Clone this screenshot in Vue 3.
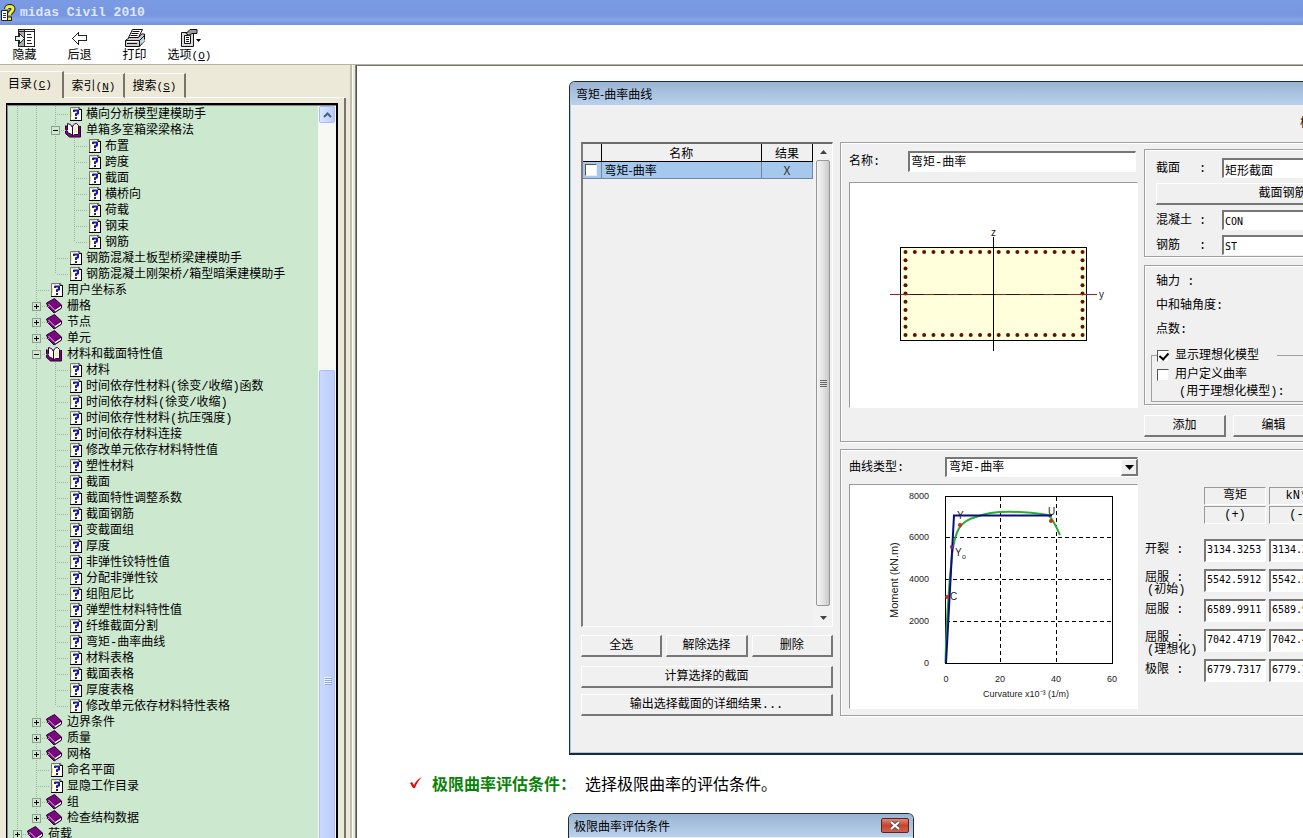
<script setup>
import { ref } from 'vue'

const source = [
  [2, 'page', '横向分析模型建模助手'],
  [2, 'open', '单箱多室箱梁梁格法'],
  [3, 'page', '布置'],
  [3, 'page', '跨度'],
  [3, 'page', '截面'],
  [3, 'page', '横桥向'],
  [3, 'page', '荷载'],
  [3, 'page', '钢束'],
  [3, 'page', '钢筋'],
  [2, 'page', '钢筋混凝土板型桥梁建模助手'],
  [2, 'page', '钢筋混凝土刚架桥/箱型暗渠建模助手'],
  [1, 'page', '用户坐标系'],
  [1, 'book', '栅格'],
  [1, 'book', '节点'],
  [1, 'book', '单元'],
  [1, 'open', '材料和截面特性值'],
  [2, 'page', '材料'],
  [2, 'page', '时间依存性材料(徐变/收缩)函数'],
  [2, 'page', '时间依存材料(徐变/收缩)'],
  [2, 'page', '时间依存性材料(抗压强度)'],
  [2, 'page', '时间依存材料连接'],
  [2, 'page', '修改单元依存材料特性值'],
  [2, 'page', '塑性材料'],
  [2, 'page', '截面'],
  [2, 'page', '截面特性调整系数'],
  [2, 'page', '截面钢筋'],
  [2, 'page', '变截面组'],
  [2, 'page', '厚度'],
  [2, 'page', '非弹性铰特性值'],
  [2, 'page', '分配非弹性铰'],
  [2, 'page', '组阻尼比'],
  [2, 'page', '弹塑性材料特性值'],
  [2, 'page', '纤维截面分割'],
  [2, 'page', '弯矩-曲率曲线'],
  [2, 'page', '材料表格'],
  [2, 'page', '截面表格'],
  [2, 'page', '厚度表格'],
  [2, 'page', '修改单元依存材料特性表格'],
  [1, 'book', '边界条件'],
  [1, 'book', '质量'],
  [1, 'book', '网格'],
  [1, 'page', '命名平面'],
  [1, 'page', '显隐工作目录'],
  [1, 'book', '组'],
  [1, 'book', '检查结构数据'],
  [0, 'book', '荷载']
]

// A guide runs through a row when a later sibling exists at that depth.
function continues(index, depth) {
  for (let i = index + 1; i < source.length; i++) {
    if (source[i][0] < depth) return false
    if (source[i][0] === depth) return true
  }
  return depth === 0
}

const rows = source.map(([level, kind, label], index) => ({
  level,
  kind,
  label,
  guides: Array.from({ length: level + 1 }, (_, depth) => ({
    full: continues(index, depth),
    branch: depth === level
  }))
}))

const results = [
  { id: 'crack', label: '开裂 :', note: '', value: '3134.3253' },
  { id: 'yield0', label: '屈服 :', note: '(初始)', value: '5542.5912' },
  { id: 'yield', label: '屈服 :', note: '', value: '6589.9911' },
  { id: 'yieldi', label: '屈服 :', note: '(理想化)', value: '7042.4719' },
  { id: 'ultimate', label: '极限 :', note: '', value: '6779.7317' }
]

const rebar = []
for (let i = 0; i < 20; i++) {
  const x = 56 + i * 9.32
  rebar.push([x, 70], [x, 153])
}
for (let i = 1; i < 10; i++) {
  const y = 70 + i * 8.3
  rebar.push([56, y], [233, y])
}

const sectionName = ref('弯矩-曲率')
const ideal = ref(true)
const custom = ref(false)
const picked = ref(false)
</script>

<template>
  <div class="window">
    <header class="titlebar">
      <svg class="app-icon" width="16" height="18" viewBox="0 0 16 18">
        <path d="M1.500 6.500h6v10h-6z" fill="#fff" stroke="#222" />
        <path d="M3 9.500h3M3 11.500h3M3 13.500h3" stroke="#333" />
        <path d="M6.500 5C6.500 1.500 13 1.500 13 5C13 7.500 9.500 8 9.500 11" fill="none" stroke="#222" stroke-width="5" />
        <path d="M6.500 5C6.500 1.500 13 1.500 13 5C13 7.500 9.500 8 9.500 11" fill="none" stroke="#f5ee32" stroke-width="3" />
        <rect x="7.500" y="13" width="4" height="3.500" fill="#f5ee32" stroke="#222" />
      </svg>
      <h1>midas Civil 2010</h1>
    </header>

    <nav class="toolbar">
      <button type="button">
        <svg width="20" height="20" viewBox="0 0 20 20" shape-rendering="crispEdges">
          <path d="M3.500 1.500h16v17h-16z" fill="#fff" stroke="#222" />
          <path d="M4 2h5v16h-5z" fill="#aaa" />
          <path d="M9.500 1v17M3 3.500h17M12 6.500h4M12 9.500h5M12 12.500h4M12 15.500h5" stroke="#222" />
          <path d="M0.500 8.500h4v-3l5 5l-5 5v-3h-4z" fill="#e4f2f2" stroke="#222" />
        </svg>
        <span>隐藏</span>
      </button>
      <button type="button">
        <svg width="20" height="20" viewBox="0 0 20 20" shape-rendering="crispEdges">
          <path d="M2.500 10.500l6-6v3h8v5h-8v4z" fill="#fff" stroke="#222" />
        </svg>
        <span>后退</span>
      </button>
      <button type="button">
        <svg width="22" height="20" viewBox="0 0 22 20">
          <path d="M8.500 1.500h10l-4 8h-10z" fill="#fff" stroke="#111" />
          <path d="M8.500 3.500h7M7.500 5.500h7M6.500 7.500h7" stroke="#111" />
          <path d="M1.500 12.500l4-3h9l3-3.500h3v7l-5 5.500h-14z" fill="#ccc" stroke="#111" />
          <path d="M1.500 12.500h14l5-5M15.500 12.500v6M3 15.500h10" fill="none" stroke="#111" />
          <path d="M3 13.500h11" stroke="#fff" />
          <path d="M17.500 14.500l3-3" stroke="#a8e8ec" stroke-width="2" />
        </svg>
        <span>打印</span>
      </button>
      <button type="button">
        <svg width="22" height="20" viewBox="0 0 22 20">
          <path d="M2.500 4.500h12v14h-12z" fill="#ddd" stroke="#111" />
          <path d="M5.500 7.500h6v8h-6z" fill="#fff" stroke="#111" />
          <path d="M7 9.500h3M7 11.500h3M7 13.500h3" stroke="#111" />
          <path d="M7 5.500l4-4h7v4h-5l-3 2z" fill="#999" stroke="#111" />
          <path d="M17 11h5l-2.500 3z" fill="#000" />
        </svg>
        <span>选项<kbd>(<u>O</u>)</kbd></span>
      </button>
    </nav>

    <div class="main">
      <aside class="side">
        <div class="tabs" role="tablist">
          <button type="button" role="tab" aria-selected="true" class="tab active">目录<kbd>(<u>C</u>)</kbd></button>
          <button type="button" role="tab" aria-selected="false" class="tab">索引<kbd>(<u>N</u>)</kbd></button>
          <button type="button" role="tab" aria-selected="false" class="tab">搜索<kbd>(<u>S</u>)</kbd></button>
          <span class="tab-rest"></span>
        </div>
        <div class="tab-page">
          <div class="tree">
            <ul>
              <li v-for="(row, i) in rows" :key="i">
                <span
                  v-for="(guide, d) in row.guides"
                  :key="d"
                  class="guide"
                  :class="{ full: guide.full, half: guide.branch && !guide.full, branch: guide.branch }"
                >
                  <button v-if="guide.branch && row.kind !== 'page'" type="button" class="toggle" :aria-label="row.label">
                    <svg width="9" height="9" viewBox="0 0 9 9" shape-rendering="crispEdges">
                      <rect x="0.500" y="0.500" width="8" height="8" fill="#cce8cf" stroke="#8f9f92" />
                      <path d="M2 4.500h5" stroke="#000" />
                      <path v-if="row.kind === 'book'" d="M4.500 2v5" stroke="#000" />
                    </svg>
                  </button>
                </span>
                <svg v-if="row.kind === 'page'" class="icon" width="20" height="16" viewBox="0 0 20 16">
                  <path d="M5.500 1.500h9l2 2v11h-11z" fill="#fff" stroke="#777" />
                  <path d="M6.500 2.500h4M6.500 6v5M8 13.500h3" stroke="#f3ea72" />
                  <path d="M16.500 3v11.500M5 14.500h12" fill="none" stroke="#000" />
                  <path d="M14 1.500v2h2.500" fill="#ffef5a" stroke="#000" />
                  <path d="M9 6V4.500h4V7.500L11 8v2" fill="none" stroke="#1c1ca8" stroke-width="2" stroke-linejoin="round" />
                  <path d="M10 11h2v2h-2z" fill="#1c1ca8" />
                </svg>
                <svg v-else-if="row.kind === 'book'" class="icon" width="20" height="16" viewBox="0 0 20 16">
                  <path d="M0.500 5l8-4.500l7 6.500v3l-7.500 5l-6-6z" fill="#7a0880" stroke="#2a0030" />
                  <path d="M8 12l7.500-5v3l-7 4.500z" fill="#fff" stroke="#2a0030" />
                  <path d="M2.500 6l6 6" stroke="#f4b8f4" />
                </svg>
                <svg v-else class="icon" width="20" height="16" viewBox="0 0 20 16">
                  <path d="M0.500 3.500v8l4 3.500h11v-11" fill="#7a0880" stroke="#2a0030" />
                  <path d="M2.500 1.500l3 1l2 3v8c-1-1.500-3-2-5-3z" fill="#fff" stroke="#2a0030" />
                  <path d="M7.500 6c0-2.500 1.500-4.500 4-4.500l2 2v9h-4l-2 1.500z" fill="#fff" stroke="#2a0030" />
                  <path d="M9 5.500v6l3-1.500v-7z" fill="#f6eeb0" />
                </svg>
                <a href="#">{{ row.label }}</a>
              </li>
            </ul>
            <div class="xp-scroll">
              <button type="button" aria-label="向上滚动">
                <svg width="9" height="6" viewBox="0 0 9 6"><path d="M1 5l3.500-3.500l3.500 3.500" fill="none" stroke="#4d6185" stroke-width="2" /></svg>
              </button>
              <div class="track"></div>
              <div class="thumb"><i></i><i></i><i></i><i></i></div>
            </div>
          </div>
        </div>
      </aside>

      <main class="pane">
        <section class="dialog">
          <h2>弯矩-曲率曲线</h2>
          <div class="dialog-body">
            <p class="clipped">极限曲率</p>
            <div class="columns">
              <div class="list-col">
                <div class="listbox">
                  <table>
                    <thead>
                      <tr><th class="c1"></th><th>名称</th><th class="c3">结果</th></tr>
                    </thead>
                    <tbody>
                      <tr>
                        <td><input v-model="picked" type="checkbox" aria-label="弯矩-曲率" /></td>
                        <td>弯矩-曲率</td>
                        <td class="x">X</td>
                      </tr>
                    </tbody>
                  </table>
                  <div class="scroll">
                    <button type="button" aria-label="向上"><svg width="7" height="4" viewBox="0 0 7 4"><path d="M0 4l3.500-4l3.500 4z" fill="#444" /></svg></button>
                    <div class="scroll-thumb"><i></i><i></i><i></i><i></i></div>
                    <button type="button" aria-label="向下"><svg width="7" height="4" viewBox="0 0 7 4"><path d="M0 0l3.500 4l3.500-4z" fill="#444" /></svg></button>
                  </div>
                </div>
                <div class="trio">
                  <button type="button" class="btn">全选</button>
                  <button type="button" class="btn">解除选择</button>
                  <button type="button" class="btn">删除</button>
                </div>
                <button type="button" class="btn">计算选择的截面</button>
                <button type="button" class="btn wide">输出选择截面的详细结果...</button>
              </div>

              <div class="groups">
                <div class="group upper">
                  <div class="view-col">
                    <div class="field">
                      <label for="name">名称:</label>
                      <input id="name" v-model="sectionName" type="text" />
                    </div>
                    <div class="canvas">
                      <svg width="287" height="224" viewBox="0 0 287 224">
                        <rect x="50.500" y="64.500" width="186" height="93" fill="#ffffdc" stroke="#000" />
                        <circle v-for="([x, y], k) in rebar" :key="k" :cx="x - 0.500" :cy="y - 1" r="2" fill="#5e1208" />
                        <path d="M40 111.500h207" stroke="#9c2020" />
                        <path d="M60 111.500h167" stroke="#401010" stroke-dasharray="14 10" />
                        <path d="M143.500 54v114" stroke="#000" />
                        <text x="141" y="53">z</text>
                        <text x="249" y="115">y</text>
                      </svg>
                    </div>
                  </div>
                  <div class="props">
                    <div class="sub first">
                      <label for="section">截面</label><b>:</b>
                      <input id="section" type="text" value="矩形截面" class="cjk" />
                      <button type="button" class="btn">截面钢筋</button>
                      <label for="con">混凝土</label><b>:</b>
                      <input id="con" type="text" value="CON" />
                      <label for="st">钢筋</label><b>:</b>
                      <input id="st" type="text" value="ST" />
                    </div>
                    <div class="sub second">
                      <p>轴力 :</p>
                      <p>中和轴角度:</p>
                      <p>点数:</p>
                      <fieldset>
                        <legend><label><input v-model="ideal" type="checkbox" />显示理想化模型</label></legend>
                        <label><input v-model="custom" type="checkbox" />用户定义曲率</label>
                        <span>(用于理想化模型):</span>
                      </fieldset>
                    </div>
                    <div class="actions">
                      <button type="button" class="btn">添加</button>
                      <button type="button" class="btn">编辑</button>
                    </div>
                  </div>
                </div>

                <div class="group lower">
                  <div class="view-col">
                    <div class="field curve">
                      <label for="type">曲线类型:</label>
                      <div class="select">
                        <select id="type"><option>弯矩-曲率</option></select>
                        <span class="drop"><svg width="9" height="5" viewBox="0 0 9 5"><path d="M0 0h9l-4.500 5z" fill="#000" /></svg></span>
                      </div>
                    </div>
                    <div class="canvas">
                      <svg width="287" height="223" viewBox="0 0 287 223">
                        <g class="ticks">
                          <text x="79" y="14">8000</text>
                          <text x="79" y="55">6000</text>
                          <text x="79" y="97">4000</text>
                          <text x="79" y="139">2000</text>
                          <text x="79" y="181">0</text>
                        </g>
                        <g class="ticks mid">
                          <text x="96" y="197">0</text>
                          <text x="150" y="197">20</text>
                          <text x="206" y="197">40</text>
                          <text x="262" y="197">60</text>
                        </g>
                        <path d="M96 52.500h166M96 94.500h166M96 136.500h166M150.500 12v166M206.500 12v166" stroke="#000" stroke-dasharray="4 3" />
                        <rect x="95.500" y="11.500" width="167" height="167" fill="none" stroke="#000" />
                        <path d="M95.500 178C96 150 98 110 102 70C105 45 110 36 126 32C140 26 165 25 198 30Q202 32 210 50" fill="none" stroke="#2eac38" stroke-width="2" />
                        <path d="M96 178L104 30.500H202" fill="none" stroke="#0c0c82" stroke-width="2" />
                        <g fill="#d0281c">
                          <circle cx="97" cy="112" r="2" />
                          <circle cx="110" cy="40" r="2" />
                          <circle cx="201" cy="36" r="2" />
                        </g>
                        <circle cx="102" cy="62" r="2" fill="#7a1c9a" />
                        <g class="marks">
                          <text x="107" y="34">Y</text>
                          <text x="198" y="30">U</text>
                          <text x="105" y="71">Y</text>
                          <text x="112" y="74" class="tiny">o</text>
                          <text x="100" y="115">C</text>
                        </g>
                        <text x="133" y="212">Curvature x10⁻³ (1/m)</text>
                        <text class="ylabel" transform="translate(48 133) rotate(-90)">Moment (kN.m)</text>
                      </svg>
                    </div>
                  </div>
                  <div class="results">
                    <span></span>
                    <div class="heads"><div>弯矩</div><div>(+)</div></div>
                    <div class="heads"><div>kN*m</div><div>(-)</div></div>
                    <template v-for="r in results" :key="r.id">
                      <label :for="r.id" :class="{ noted: r.note }">{{ r.label }}<em v-if="r.note">{{ r.note }}</em></label>
                      <input :id="r.id" type="text" :value="r.value" />
                      <input type="text" :value="r.value" :aria-label="r.label + ' (-)'" />
                    </template>
                  </div>
                </div>
              </div>
            </div>
          </div>
        </section>

        <p class="note">
          <svg width="12" height="12" viewBox="0 0 12 12"><path d="M0 6l2-1l2 3c2-4 4-6 8-8c-3 3-5 6-7 11h-2z" fill="#e01010" /></svg>
          <strong>极限曲率评估条件：</strong><span>选择极限曲率的评估条件。</span>
        </p>

        <section class="dialog second-dialog">
          <h2>极限曲率评估条件
            <button type="button" aria-label="关闭">
              <svg width="12" height="9" viewBox="0 0 12 9"><path d="M2 1l8 7M10 1l-8 7" stroke="#555" stroke-width="4" /><path d="M2 1l8 7M10 1l-8 7" stroke="#fff" stroke-width="2" /></svg>
            </button>
          </h2>
        </section>
      </main>
    </div>
  </div>
</template>

<style>
body {
  margin: 0;
  overflow: hidden;
}
</style>

<style scoped>
* {
  box-sizing: border-box;
}
.window {
  height: 100vh;
  display: flex;
  flex-direction: column;
  overflow: hidden;
  background: #ece9d8;
  color: #000;
  font: 12px/16px "Liberation Mono", "Noto Sans CJK SC", sans-serif;
}
button,
input,
select {
  font: inherit;
  color: inherit;
  margin: 0;
}
p,
h1,
h2,
ul {
  margin: 0;
  padding: 0;
}
kbd {
  font: 11px/14px "Liberation Mono", monospace;
}
.titlebar {
  height: 25px;
  flex: none;
  display: flex;
  align-items: center;
  gap: 4px;
  background: linear-gradient(#7a9be4, #7896e0 60%, #86a6ea 80%, #7590d8);
}
.titlebar h1 {
  font: bold 13px/16px "Liberation Mono", monospace;
  color: #dfe8ff;
}
.toolbar {
  height: 40px;
  flex: none;
  display: flex;
  background: #fff;
  border-bottom: 1px solid #b5b3a8;
  padding-top: 3px;
  margin-left: -3px;
}
.toolbar button {
  width: 55px;
  padding: 0;
  border: 0;
  background: none;
  display: flex;
  flex-direction: column;
  align-items: center;
  white-space: nowrap;
}
.toolbar svg {
  height: 20px;
  flex: none;
}
.toolbar span {
  line-height: 16px;
}
.main {
  flex: 1;
  min-height: 0;
  display: flex;
}
.side {
  width: 356px;
  flex: none;
  display: flex;
  flex-direction: column;
  padding-top: 6px;
  border-right: 1px solid #8a887c;
  box-shadow: inset -2px 0 #ece9d8, inset -3px 0 #fff, inset -5px 0 #c2bfae;
}
.tabs {
  display: flex;
  align-items: flex-end;
  height: 27px;
  margin-right: 10px;
  flex: none;
}
.tab {
  height: 25px;
  width: 61px;
  padding: 3px 0 0 0;
  border: 0;
  border-top: 1px solid #fff;
  border-right: 2px solid #777469;
  border-bottom: 1px solid #fff;
  background: #ece9d8;
  white-space: nowrap;
}
.tab.active {
  height: 27px;
  width: 64px;
  border-bottom: 0;
  padding: 0 2px 1px 0;
}
.tab-rest {
  flex: 1;
  border-bottom: 1px solid #fff;
}
.tab-page {
  flex: 1;
  min-height: 0;
  margin-right: 9px;
  padding: 5px 6px 0 6px;
  border-right: 2px solid #777469;
}
.tree {
  height: 100%;
  display: flex;
  border: 1px solid #000;
  border-width: 2px 2px 0 1px;
  background: #cce8cf;
  box-shadow: inset 1px 1px #888;
}
.tree ul {
  flex: 1;
  min-width: 0;
  overflow: hidden;
  list-style: none;
  padding: 1px 0 0 1px;
}
.tree li {
  height: 16px;
  display: flex;
  align-items: center;
  white-space: nowrap;
}
.tree a {
  color: #000;
  text-decoration: none;
  padding: 1px 0 0 1px;
}
.guide {
  width: 19px;
  height: 16px;
  flex: none;
  display: flex;
  align-items: center;
  justify-content: center;
  background-repeat: no-repeat;
}
.guide.full {
  background-image: repeating-linear-gradient(#9db3a0 0 1px, transparent 1px 2px);
  background-size: 1px 16px;
  background-position: 9px 0;
}
.guide.half {
  background-image: repeating-linear-gradient(#9db3a0 0 1px, transparent 1px 2px);
  background-size: 1px 8px;
  background-position: 9px 0;
}
.guide.branch {
  position: relative;
}
.guide.branch::after {
  content: "";
  position: absolute;
  left: 11px;
  top: 8px;
  width: 11px;
  height: 1px;
  background: repeating-linear-gradient(90deg, #9db3a0 0 1px, transparent 1px 2px);
}
.toggle {
  position: relative;
  z-index: 1;
  width: 9px;
  height: 9px;
  padding: 0;
  border: 0;
  background: none;
  display: flex;
}
.icon {
  flex: none;
}
.xp-scroll {
  width: 18px;
  flex: none;
  margin-top: 1px;
  padding: 0 1px;
  display: flex;
  flex-direction: column;
  background: #f7f7f3;
}
.xp-scroll button {
  height: 17px;
  flex: none;
  padding: 0;
  border: 1px solid #a8bdf0;
  border-radius: 2px;
  background: linear-gradient(90deg, #dbe6ff, #b9cbfa);
  display: flex;
  align-items: center;
  justify-content: center;
}
.track {
  flex: 1;
}
.thumb {
  height: 64%;
  flex: none;
  display: flex;
  flex-direction: column;
  align-items: center;
  gap: 1px;
  padding-top: 306px;
  border: 1px solid #a9bff5;
  border-bottom: 0;
  border-radius: 2px 2px 0 0;
  background: linear-gradient(90deg, #cbdafe, #bccdf9);
}
.thumb i {
  width: 7px;
  height: 1px;
  background: #eef4ff;
  box-shadow: 1px 1px #8ea8e8;
}
.pane {
  flex: 1;
  min-width: 0;
  overflow: hidden;
  background: #fff;
  border-left: 1px solid #55534a;
  border-top: 1px solid #77756c;
  padding: 15px 0 0 212px;
}
.dialog {
  margin-right: -146px;
  border: 1px solid #1d2b38;
  border-bottom-width: 2px;
  border-radius: 6px 0 0 0;
  background: #f0f0f0;
  box-shadow: inset 1px -1px #a6cbe0;
  overflow: hidden;
}
.dialog h2 {
  height: 23px;
  font: 12px/23px "Noto Sans CJK SC", sans-serif;
  padding-left: 6px;
  background: linear-gradient(#9ab4d2, #b9d1ec);
}
.dialog-body {
  padding: 5px 12px 37px 11px;
}
.clipped {
  padding: 6px 88px 10px 0;
  text-align: right;
}
.columns {
  display: flex;
  gap: 7px;
}
.list-col {
  width: 252px;
  flex: none;
  display: flex;
  flex-direction: column;
}
.listbox {
  height: 485px;
  display: flex;
  border: 1px solid #fff;
  border-top: 2px solid #6b6b6b;
  border-left: 2px solid #7b7b7b;
  font-family: "Noto Sans CJK SC", sans-serif;
}
table {
  flex: 1;
  align-self: flex-start;
  border-collapse: collapse;
  table-layout: fixed;
}
th,
td {
  height: 17px;
  padding: 1px 0 0;
  line-height: 16px;
  font-weight: normal;
  border-right: 1px solid #000;
  border-bottom: 1px solid #000;
}
.c1 {
  width: 18px;
}
.c3 {
  width: 51px;
}
td {
  background: #a6c8ec;
  border-color: #6f87a3;
  padding: 0 0 0 3px;
}
td:first-child {
  padding: 0 0 0 2px;
}
td.x {
  text-align: center;
  padding: 0;
  color: #333;
}
input[type="checkbox"] {
  appearance: none;
  position: relative;
  width: 12px;
  height: 12px;
  flex: none;
  display: block;
  background: #fff;
  border: 1px solid #eee;
  border-top-color: #555;
  border-left-color: #555;
}
input[type="checkbox"]:checked::after {
  content: "";
  position: absolute;
  left: 3px;
  top: 0;
  width: 4px;
  height: 7px;
  border: solid #000;
  border-width: 0 2px 2px 0;
  transform: rotate(42deg);
}
.scroll {
  width: 19px;
  flex: none;
  padding: 0 2px 0 3px;
  display: flex;
  flex-direction: column;
  background: #f2f2f2;
}
.scroll button {
  height: 16px;
  flex: none;
  padding: 0;
  border: 0;
  background: none;
  display: flex;
  align-items: center;
  justify-content: center;
}
.scroll-thumb {
  flex: 1;
  margin-bottom: 4px;
  border: 1px solid #979797;
  border-radius: 2px;
  background: linear-gradient(90deg, #f4f4f4, #e4e4e4 50%, #c9c9cd);
  display: flex;
  flex-direction: column;
  align-items: center;
  justify-content: center;
  gap: 1px;
}
.scroll-thumb i {
  width: 7px;
  height: 1px;
  background: #666;
}
.btn {
  height: 22px;
  padding: 1px 0 0;
  border: 1px solid #fff;
  border-right: 2px solid #777;
  border-bottom: 2px solid #777;
  background: #f0f0f0;
  line-height: 18px;
  white-space: nowrap;
}
.trio {
  display: flex;
  gap: 4px;
  margin: 8px 0 9px;
}
.trio .btn {
  flex: 1;
}
.wide {
  margin-top: 6px;
}
.groups {
  flex: 1;
  min-width: 0;
  display: flex;
  flex-direction: column;
  gap: 7px;
}
.group {
  display: flex;
  gap: 6px;
  border: 1px solid #a0a0a0;
  box-shadow: inset 1px 1px #fff, 1px 1px #fff;
  padding: 6px 12px 5px 8px;
}
.upper {
  height: 300px;
}
.lower {
  height: 267px;
}
.view-col {
  width: 289px;
  flex: none;
}
.field {
  height: 21px;
  display: flex;
  align-items: center;
  margin: 2px 2px 10px 0;
}
.field label {
  width: 59px;
  padding-top: 1px;
  flex: none;
}
input[type="text"] {
  min-width: 0;
  height: 21px;
  padding: 0 0 2px 1px;
  border: 1px solid #fff;
  border-top: 2px solid #777;
  border-left: 2px solid #777;
  border-radius: 0;
  background: #fff;
}
.field input[type="text"] {
  flex: 1;
}
.canvas {
  border: 1px solid #fff;
  border-top-color: #999;
  border-left-color: #999;
  background: #fff;
}
.canvas svg {
  display: block;
}
.canvas text {
  font: 9px "Liberation Sans", sans-serif;
  fill: #222;
}
.upper .canvas text {
  font-size: 10px;
}
.ticks text {
  text-anchor: end;
}
.ticks.mid text {
  text-anchor: middle;
}
.canvas .marks text {
  font-size: 10px;
}
.canvas .marks .tiny {
  font-size: 7px;
}
.canvas text.ylabel {
  font-size: 11px;
}
.props {
  flex: 1;
  min-width: 0;
}
.sub {
  border: 1px solid #a0a0a0;
  box-shadow: inset 1px 1px #fff, 1px 1px #fff;
}
.first {
  height: 108px;
  display: grid;
  grid-template-columns: 43px 23px 1fr;
  grid-template-rows: 20px 22px 20px 20px;
  row-gap: 5px;
  align-items: center;
  padding: 8px 12px 0 11px;
}
.first b {
  font-weight: normal;
}
.first label,
.first b {
  padding-top: 2px;
}
.first .btn {
  grid-column: 1 / -1;
}
.first input[type="text"] {
  height: 20px;
  padding: 1px 0 0 1px;
  font: 10px/16px "DejaVu Sans Mono", monospace;
}
.first input.cjk[type="text"] {
  font: 12px/16px "Noto Sans CJK SC", sans-serif;
}
.second {
  height: 140px;
  margin-top: 8px;
  padding: 4px 5px 0 6px;
}
.second p {
  padding-left: 5px;
  line-height: 24px;
}
.second fieldset {
  margin: 5px 0 0;
  padding: 2px 0 0 5px;
  border: 1px solid #a0a0a0;
  min-width: 0;
}
.second legend {
  padding: 0 18px 0 0;
}
.second label {
  display: flex;
  align-items: center;
  gap: 6px;
  height: 17px;
}
.second span {
  display: block;
  padding-left: 22px;
  line-height: 18px;
}
.actions {
  display: flex;
  gap: 7px;
  margin-top: 10px;
}
.actions .btn {
  width: 82px;
}
.curve {
  height: 20px;
  margin: 1px 0 7px;
}
.curve label {
  width: 96px;
}
.select {
  position: relative;
  flex: 1;
  height: 20px;
}
.select select {
  width: 100%;
  height: 20px;
  appearance: none;
  padding: 1px 0 0 2px;
  border: 1px solid #fff;
  border-top: 2px solid #777;
  border-left: 2px solid #777;
  border-radius: 0;
  background: #fff;
}
.drop {
  position: absolute;
  right: 0;
  top: 2px;
  width: 17px;
  height: 17px;
  display: flex;
  align-items: center;
  justify-content: center;
  border: 1px solid #fff;
  border-right: 2px solid #777;
  border-bottom: 2px solid #777;
  background: #f0f0f0;
  pointer-events: none;
}
.results {
  display: grid;
  grid-template-columns: 56px 62px 62px;
  grid-template-rows: 44px repeat(5, 22px);
  column-gap: 3px;
  row-gap: 8px;
  align-content: start;
  padding: 31px 0 0 1px;
}
.results label {
  line-height: 12px;
  padding-top: 5px;
  white-space: nowrap;
}
.results label.noted {
  padding-top: 3px;
}
.results em {
  display: block;
  font-style: normal;
  padding-left: 2px;
}
.results input[type="text"] {
  width: 62px;
  height: 23px;
  padding: 0 0 4px 1px;
  font: 10px "DejaVu Sans Mono", monospace;
}
.heads {
  display: flex;
  flex-direction: column;
  gap: 1px;
}
.heads div {
  height: 18px;
  border: 1px solid #fff;
  border-top-color: #999;
  border-left-color: #999;
  line-height: 17px;
  text-align: center;
}
.note {
  display: flex;
  align-items: center;
  height: 24px;
  margin: 16px 0 18px -159px;
  font: 16px/24px "Noto Sans CJK SC", sans-serif;
  white-space: nowrap;
}
.note strong {
  color: #0a820a;
  margin: 0 9px 0 10px;
}
.second-dialog {
  width: 346px;
  margin: 0 0 0 -1px;
  border-radius: 6px 6px 0 0;
  height: 60px;
}
.second-dialog h2 {
  display: flex;
  justify-content: space-between;
  padding: 0 4px 0 5px;
}
.second-dialog button {
  width: 28px;
  height: 15px;
  margin-top: 4px;
  padding: 0;
  display: flex;
  align-items: center;
  justify-content: center;
  border: 1px solid #5a2320;
  border-radius: 2px;
  background: linear-gradient(#dd8878, #c8432f 50%, #d4604a);
}
</style>
